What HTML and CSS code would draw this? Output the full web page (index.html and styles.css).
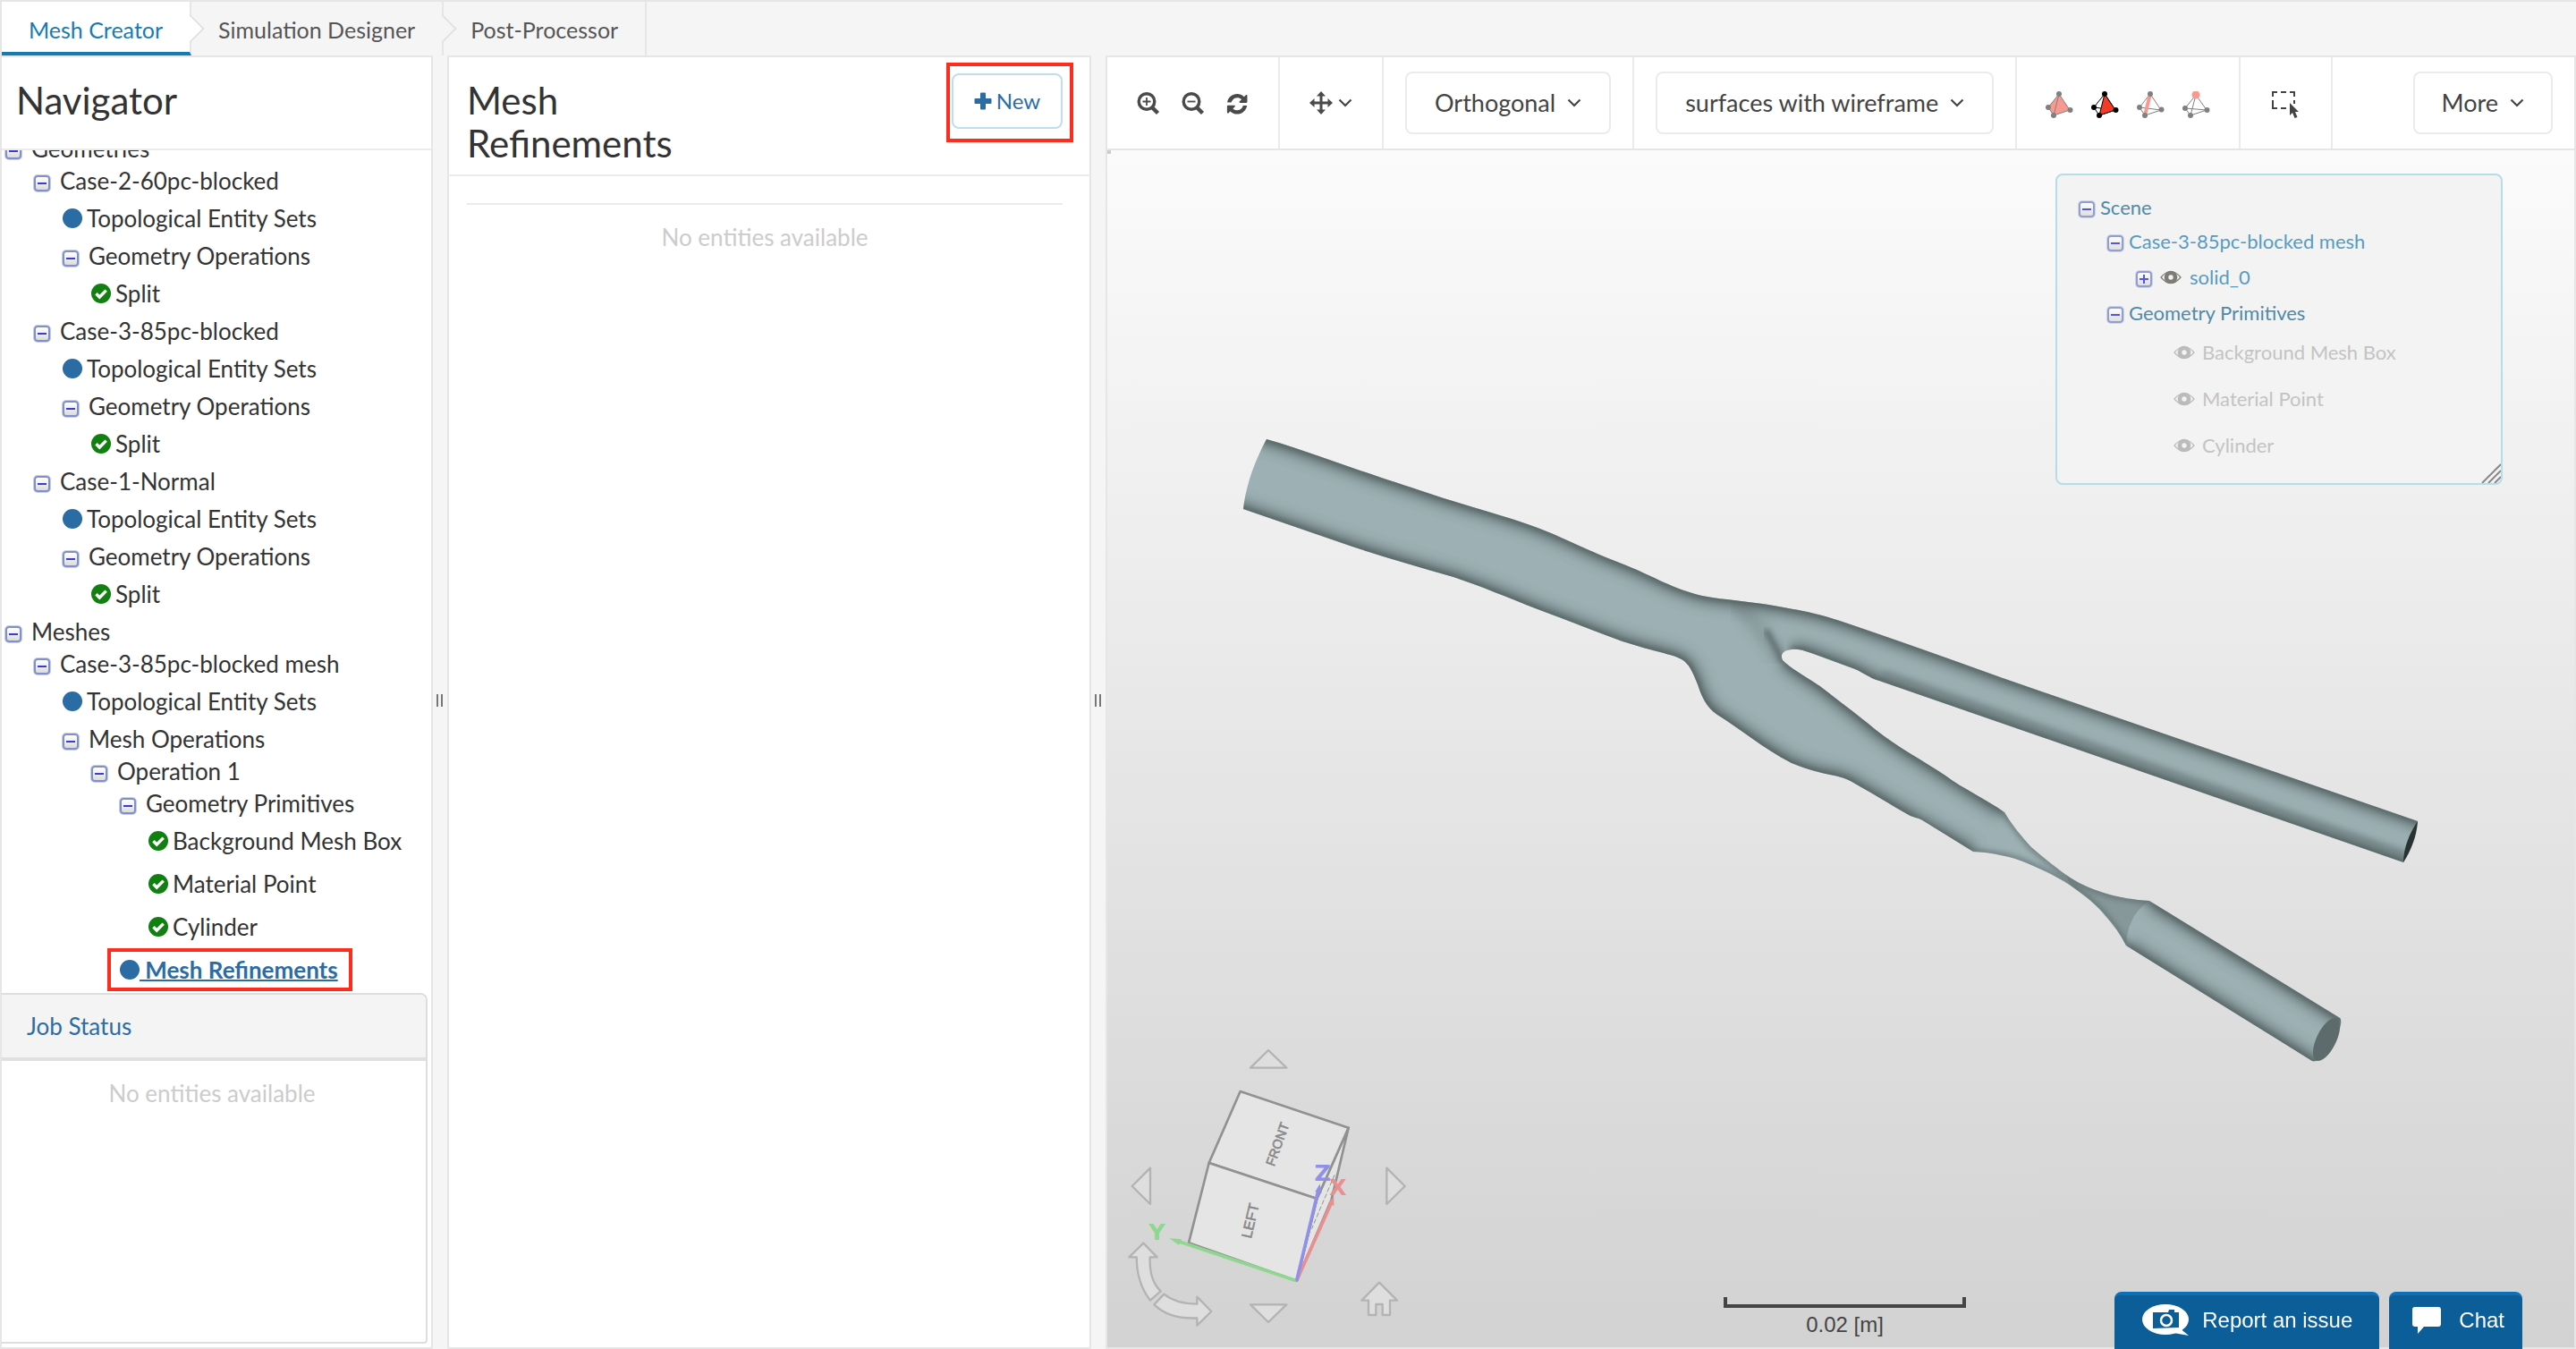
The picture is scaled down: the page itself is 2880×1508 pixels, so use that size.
FILE: index.html
```html
<!DOCTYPE html>
<html lang="en">
<head>
<meta charset="utf-8">
<title>Mesh Creator</title>
<link rel="stylesheet" href="styles.css">
</head>
<body>
<svg class="defs" aria-hidden="true">
  <symbol id="check" viewBox="0 0 22 22"><circle cx="11" cy="11" r="11" fill="#118011"/><path d="M5.500 11.200l3.800 3.800 7.400-7.400" fill="none" stroke="#fff" stroke-width="3.400"/></symbol>
  <symbol id="dot" viewBox="0 0 22 22"><circle cx="11" cy="11" r="11" fill="#2c6ca5"/></symbol>
  <symbol id="eye" viewBox="0 0 24 16"><path d="M1 8Q12-5 23 8Q12 21 1 8z" fill="none" stroke="currentColor" stroke-width="1.200"/><circle cx="12" cy="8" r="5" fill="none" stroke="currentColor" stroke-width="4.600"/></symbol>
  <symbol id="chev" viewBox="0 0 16 10"><path d="M1.500 1.500L8 8l6.500-6.500" fill="none" stroke="#444" stroke-width="2.200"/></symbol>
</svg>
<div class="app">
  <nav class="tabs">
    <a class="tab active" href="#mesh">Mesh Creator</a>
    <a class="tab" href="#sim">Simulation Designer</a>
    <a class="tab" href="#post">Post-Processor</a>
  </nav>
  <main class="panes">
    <section class="pane navigator">
      <header class="pane-head"><h1>Navigator</h1></header>
      <div class="tree-scroll">
        <ul class="tree">
          <li><div class="node"><button class="toggle" aria-label="Collapse"></button>Geometries</div>
            <ul>
              <li><div class="node"><button class="toggle" aria-label="Collapse"></button>Case-2-60pc-blocked</div>
                <ul>
                  <li class="leaf"><svg class="status"><use href="#dot"/></svg>Topological Entity Sets</li>
                  <li><div class="node"><button class="toggle" aria-label="Collapse"></button>Geometry Operations</div>
                    <ul><li class="leaf"><svg class="status"><use href="#check"/></svg>Split</li></ul></li>
                </ul></li>
              <li><div class="node"><button class="toggle" aria-label="Collapse"></button>Case-3-85pc-blocked</div>
                <ul>
                  <li class="leaf"><svg class="status"><use href="#dot"/></svg>Topological Entity Sets</li>
                  <li><div class="node"><button class="toggle" aria-label="Collapse"></button>Geometry Operations</div>
                    <ul><li class="leaf"><svg class="status"><use href="#check"/></svg>Split</li></ul></li>
                </ul></li>
              <li><div class="node"><button class="toggle" aria-label="Collapse"></button>Case-1-Normal</div>
                <ul>
                  <li class="leaf"><svg class="status"><use href="#dot"/></svg>Topological Entity Sets</li>
                  <li><div class="node"><button class="toggle" aria-label="Collapse"></button>Geometry Operations</div>
                    <ul><li class="leaf"><svg class="status"><use href="#check"/></svg>Split</li></ul></li>
                </ul></li>
            </ul></li>
          <li><div class="node"><button class="toggle" aria-label="Collapse"></button>Meshes</div>
            <ul>
              <li><div class="node"><button class="toggle" aria-label="Collapse"></button>Case-3-85pc-blocked mesh</div>
                <ul>
                  <li class="leaf"><svg class="status"><use href="#dot"/></svg>Topological Entity Sets</li>
                  <li><div class="node"><button class="toggle" aria-label="Collapse"></button>Mesh Operations</div>
                    <ul>
                      <li><div class="node"><button class="toggle" aria-label="Collapse"></button>Operation 1</div>
                        <ul>
                          <li><div class="node"><button class="toggle" aria-label="Collapse"></button>Geometry Primitives</div>
                            <ul>
                              <li class="leaf"><svg class="status"><use href="#check"/></svg>Background Mesh Box</li>
                              <li class="leaf"><svg class="status"><use href="#check"/></svg>Material Point</li>
                              <li class="leaf"><svg class="status"><use href="#check"/></svg>Cylinder</li>
                            </ul></li>
                          <li class="leaf current"><svg class="status"><use href="#dot"/></svg><a href="#refinements">&nbsp;Mesh Refinements</a></li>
                        </ul></li>
                    </ul></li>
                </ul></li>
            </ul></li>
        </ul>
      </div>
      <section class="jobs">
        <h2><a href="#jobs">Job Status</a></h2>
        <p class="empty">No entities available</p>
      </section>
    </section>
    <div class="splitter"><i></i></div>
    <section class="pane detail">
      <header class="pane-head detail-head">
        <h1>Mesh Refinements</h1>
        <div class="marked"><button class="new"><svg viewBox="0 0 20 20"><path d="M7 1.500a1 1 0 0 1 1-1h4a1 1 0 0 1 1 1V7h5.500a1 1 0 0 1 1 1v4a1 1 0 0 1-1 1H13v5.500a1 1 0 0 1-1 1H8a1 1 0 0 1-1-1V13H1.500a1 1 0 0 1-1-1V8a1 1 0 0 1 1-1H7z" fill="currentColor"/></svg>New</button></div>
      </header>
      <div class="detail-body"><hr><p class="empty">No entities available</p></div>
    </section>
    <div class="splitter"><i></i></div>
    <section class="pane viewer">
      <div class="toolbar">
        <div class="group icons">
          <button aria-label="Zoom in"><svg width="26" height="26" viewBox="0 0 26 26" fill="none" stroke="#4a4a4a"><circle cx="11" cy="10.500" r="8.800" stroke-width="3.400"/><path d="M11 6v9M6.500 10.500h9" stroke-width="1.800"/><path d="M17 17l6.500 6.500" stroke-width="4.400"/></svg></button>
          <button aria-label="Zoom out"><svg width="26" height="26" viewBox="0 0 26 26" fill="none" stroke="#4a4a4a"><circle cx="11" cy="10.500" r="8.800" stroke-width="3.400"/><path d="M6.500 10.500h9" stroke-width="1.800"/><path d="M17 17l6.500 6.500" stroke-width="4.400"/></svg></button>
          <button aria-label="Reset"><svg width="24" height="24" viewBox="0 0 512 512"><path fill="#4a4a4a" d="M494 310c0 1 0 2-1 3-27 111-119 188-235 188-61 0-121-24-165-66l-43 43c-3 3-8 5-13 5-10 0-18-8-18-18V310c0-10 8-18 18-18h156c10 0 18 8 18 18 0 5-2 10-5 13l-49 49c27 25 63 39 100 39 51 0 98-26 125-70 7-11 11-22 16-33 1-4 4-7 9-7h78c5 0 9 4 9 9zM500 60v155c0 10-8 18-18 18H326c-10 0-18-8-18-18 0-5 2-10 5-13l50-50c-27-25-63-38-100-38-51 0-98 26-125 70-7 11-11 22-16 33-1 4-4 7-9 7H32c-5 0-9-4-9-9v-3C50 100 142 23 258 23c62 0 122 24 166 67l44-44c3-3 8-5 13-5 10 0 19 9 19 19z"/></svg></button>
        </div>
        <div class="group move"><button aria-label="Move"><svg width="26" height="26" viewBox="0 0 26 26" fill="#4a4a4a"><path d="M13 0l5 5.500h-3.500v6h6V8L26 13l-5.500 5v-3.500h-6v6H18L13 26l-5-5.500h3.500v-6h-6V18L0 13l5.500-5v3.500h6v-6H8z"/></svg><svg class="chev"><use href="#chev"/></svg></button></div>
        <div class="group"><button class="drop">Orthogonal<svg class="chev"><use href="#chev"/></svg></button></div>
        <div class="group"><button class="drop">surfaces with wireframe<svg class="chev"><use href="#chev"/></svg></button></div>
        <div class="group tets">
          <button aria-label="Pick volumes"><svg viewBox="0 0 31 30"><path d="M15 3L3 18l6 9 18-6z" fill="#f9988f" stroke="#808080"/><path d="M15 3L9 27" stroke="#808080"/><g fill="#808080"><circle cx="15" cy="3" r="3"/><circle cx="3" cy="18" r="3"/><circle cx="9" cy="27" r="3"/><circle cx="27.500" cy="21" r="3"/></g></svg></button>
          <button aria-label="Pick faces"><svg viewBox="0 0 31 30"><path d="M15 3L3 18l6 9 18-6zM3 18l24 3" fill="none" stroke="#000"/><path d="M15 3L9 27l18-6z" fill="#f43b26" stroke="#000"/><g><circle cx="15" cy="3" r="3"/><circle cx="3" cy="18" r="3"/><circle cx="9" cy="27" r="3"/><circle cx="27.500" cy="21" r="3"/></g></svg></button>
          <button aria-label="Pick edges"><svg viewBox="0 0 31 30"><path d="M15 3L3 18l6 9 18-6zM3 18l24 3" fill="none" stroke="#808080"/><path d="M15 3L9 27" stroke="#f9988f" stroke-width="4"/><g fill="#808080"><circle cx="15" cy="3" r="3"/><circle cx="3" cy="18" r="3"/><circle cx="9" cy="27" r="3"/><circle cx="27.500" cy="20.500" r="3"/></g></svg></button>
          <button aria-label="Pick vertices"><svg viewBox="0 0 31 30"><path d="M15 4L3 19l6 8 18-6zM3 19l24 2M15 4L9 27" fill="none" stroke="#808080"/><g fill="#808080"><circle cx="3" cy="19" r="3"/><circle cx="9" cy="27" r="3"/><circle cx="27.500" cy="21" r="3"/></g><circle cx="15" cy="4" r="4.500" fill="#f9988f"/></svg></button>
        </div>
        <div class="group select"><button aria-label="Box select"><svg width="31" height="30" viewBox="0 0 31 30"><path d="M1 6V1h5M10 1h6M20 1h5v5M1 10v5M1 15v4h5M10 19h6M25 10v4" fill="none" stroke="#444" stroke-width="2"/><path d="M20 13v14l3-3 2.500 6 3-1-2.500-6h4z" fill="#444"/></svg></button></div>
        <button class="drop more">More<svg class="chev"><use href="#chev"/></svg></button>
      </div>
      <div class="scene">
        <svg class="vessel" viewBox="1238 168 1640 1338" role="img" aria-label="Blocked artery mesh">
          <defs>
            <path id="body" d="M1416 491C1448 500 1480 512 1512 523S1568 542 1596 551C1640 566 1685 577 1719 590S1780 618 1818 632C1850 645 1870 658 1903 666C1930 671 1955 672 1983 677S2030 685 2057 694C2120 715 2180 737 2239 758L2703 918C2699 935 2693 950 2687 964L2101 761C2090 758 2082 751 2074 748L2025 730C2015 726 2008 725 2003 726C1993 727 1990 732 1993 738C2003 748 2020 757 2036 768C2058 785 2078 800 2096 815C2122 836 2150 850 2175 867C2195 882 2220 893 2241 908C2250 923 2260 935 2271 947C2284 958 2297 969 2310 978C2335 996 2370 1005 2403 1007L2616 1138C2621 1144 2610 1168 2598 1181C2593 1186 2589 1187 2585 1186L2377 1057C2371 1045 2363 1034 2354 1024C2343 1010 2329 1000 2315 990C2300 980 2285 973 2271 967C2250 957 2225 953 2206 952L2151 918C2146 914 2139 914 2134 911C2113 899 2092 886 2074 876C2065 870 2056 868 2046 866C2030 863 2015 858 2003 853C1970 836 1945 814 1920 799C1908 791 1902 778 1898 765C1893 753 1889 742 1880 737C1873 733 1866 732 1860 730C1844 726 1830 722 1814 717C1782 705 1751 693 1719 681C1686 668 1655 655 1625 645C1587 634 1548 623 1512 611L1390 569C1393 542 1403 515 1416 491z"/>
            <clipPath id="bodyclip"><use href="#body"/></clipPath>
            <filter id="soft" x="-10%" y="-10%" width="120%" height="120%"><feGaussianBlur stdDeviation="8"/></filter>
            <filter id="softer" x="-10%" y="-10%" width="120%" height="120%"><feGaussianBlur stdDeviation="3"/></filter>
            <g id="sides">
              <path d="M1370 476L1416 491C1448 500 1480 512 1512 523S1568 542 1596 551C1640 566 1685 577 1719 590S1780 618 1818 632C1850 645 1870 658 1903 666C1930 671 1955 672 1983 677S2030 685 2057 694C2120 715 2180 737 2239 758L2750 934"/>
              <path d="M1360 559L1390 569L1512 611C1548 623 1587 634 1625 645C1655 655 1686 668 1719 681C1751 693 1782 705 1814 717C1830 722 1844 726 1860 730C1866 732 1873 733 1880 737C1889 742 1893 753 1898 765C1902 778 1908 791 1920 799C1945 814 1970 836 2003 853C2015 858 2030 863 2046 866C2056 868 2065 870 2074 876L2134 911L2206 952"/>
              <path d="M1993 738C2003 748 2020 757 2036 768C2058 785 2078 800 2096 815C2122 836 2150 850 2175 867L2241 908"/>
              <path d="M2730 979L2101 761C2090 758 2082 751 2074 748L2025 730C2015 726 2008 725 2003 726"/>
              <path d="M2403 1007L2650 1159M2377 1057L2620 1208"/>
            </g>
            <g id="neck">
              <path d="M2241 908C2250 923 2260 935 2271 947C2284 958 2297 969 2310 978C2335 996 2370 1005 2403 1007M2206 952C2225 953 2250 957 2271 967C2285 973 2300 980 2315 990C2329 1000 2343 1010 2354 1024C2363 1034 2371 1045 2377 1057"/>
            </g>
          </defs>
          <use href="#body" fill="#9db1b4"/>
          <g clip-path="url(#bodyclip)" fill="none" stroke="#3d4a49">
            <use href="#sides" filter="url(#soft)" stroke-width="13" opacity=".7"/>
            <use href="#sides" filter="url(#softer)" stroke-width="5" opacity=".7"/>
            <use href="#neck" filter="url(#softer)" stroke-width="5" opacity=".6"/>
            <path d="M1940 676C1960 690 1972 710 1990 736" filter="url(#soft)" stroke-width="10" opacity=".35"/>
            <path d="M1974 704C1982 716 1986 726 1992 738" filter="url(#softer)" stroke-width="5" opacity=".7"/>
            <path d="M2106 752L2690 955" filter="url(#softer)" stroke-width="4" opacity=".3"/>
            <path d="M2377 1057C2378 1035 2386 1018 2403 1007C2370 1005 2335 996 2310 978L2315 990C2345 1010 2365 1030 2377 1057z" fill="#5c6b6b" stroke="none" opacity=".35"/>
          </g>
          <path d="M2703 918C2694 931 2687 948 2687 964C2696 950 2702 934 2703 918z" fill="#273232"/>
          <ellipse cx="2601" cy="1162" rx="11" ry="26" transform="rotate(26 2601 1162)" fill="#5d6b6c"/>
        </svg>
        <aside class="scene-tree">
          <div class="row"><button class="toggle" aria-label="Collapse"></button><a class="dark" href="#scene">Scene</a></div>
          <div class="row l1 tight"><button class="toggle" aria-label="Collapse"></button><a href="#case3">Case-3-85pc-blocked mesh</a></div>
          <div class="row l2 solid"><button class="toggle plus" aria-label="Expand"></button><svg class="eye on"><use href="#eye"/></svg><a href="#solid">solid_0</a></div>
          <div class="row l1"><button class="toggle" aria-label="Collapse"></button><a class="dark" href="#prims">Geometry Primitives</a></div>
          <div class="row l3"><svg class="eye"><use href="#eye"/></svg>Background Mesh Box</div>
          <div class="row l3"><svg class="eye"><use href="#eye"/></svg>Material Point</div>
          <div class="row l3"><svg class="eye"><use href="#eye"/></svg>Cylinder</div>
          <svg class="grip" viewBox="0 0 22 22"><path d="M1 22L22 1M8 22L22 8M15 22l7-7" stroke="#888" stroke-width="2"/></svg>
        </aside>
        <svg class="gizmo" viewBox="0 0 1080 1068" role="img" aria-label="View cube">
          <g fill="#dedede" stroke="#b3b3b3" stroke-width="7" stroke-linejoin="round">
            <path d="M534 72l61 59H474zM534 984l61-59H474zM77 528l61-61v121zM992 528l-61-61v121z"/>
            <path d="M115 719l46 47h-24c-2 50 10 90 36 114l-35 31c-30-38-46-84-46-145H67z"/>
            <path d="M184 890c32 26 68 33 111 33v-24l48 49-48 47v-25c-56 3-108-10-144-45z"/>
            <path d="M906 851l60 60h-24v49h-25v-36h-22v36h-25v-49h-23z"/>
          </g>
          <g fill="#e5e5e5" stroke="#919191" stroke-width="8" stroke-linejoin="round">
            <path d="M803 332l-57 240-117 273 68-275z"/>
            <path d="M440 210l363 122-106 238-362-120z"/>
            <path d="M335 450l362 120-68 275-362-127z"/>
            <path d="M756 490l-76 180" fill="none" stroke-width="3" stroke-dasharray="16 7"/>
          </g>
          <g class="face"><text x="565" y="402" transform="rotate(-70 565 387)" font-size="44">FRONT</text><text x="474" y="660" transform="rotate(-77 474 644)" font-size="48">LEFT</text></g>
          <g stroke-width="11" fill="none"><path d="M629 845L745 585" stroke="#e89090"/><path d="M629 845L236 714" stroke="#8fd68f"/><path d="M629 845L702 540" stroke="#9090e8"/></g>
          <path d="M754 564l0 30-20-9z" fill="#e89090"/><path d="M201 703l42 3-9 19z" fill="#8fd68f"/><path d="M707 520l6 32-22-5z" fill="#9090e8"/>
          <g class="axis"><text x="716" y="510" fill="#9090e8">Z</text><text x="767" y="557" fill="#e89090">X</text><text x="160" y="707" fill="#8fd68f">Y</text></g>
        </svg>
        <div class="scale"><i></i>0.02 [m]</div>
      </div>
    </section>
  </main>
  <div class="support">
    <button><svg width="54" height="36" viewBox="0 0 54 36"><ellipse cx="27" cy="17" rx="26" ry="17" fill="#fff"/><path d="M42 26l11 9-17-3z" fill="#fff"/><path d="M13 9h17l1-3h6v3h5v17l-29 1z" fill="#0c5e99"/><circle cx="28" cy="18" r="6" fill="none" stroke="#fff" stroke-width="2.500"/></svg>Report an issue</button>
    <button class="chat"><svg width="32" height="30" viewBox="0 0 32 30"><path d="M3 0h26a3 3 0 0 1 3 3v16a3 3 0 0 1-3 3H13l-7 8v-8H3a3 3 0 0 1-3-3V3a3 3 0 0 1 3-3z" fill="#fff"/></svg>Chat</button>
  </div>
</div>
</body>
</html>
```
FILE: styles.css
```css
*, *::before, *::after { box-sizing: border-box; }
body { margin: 0; font: 26px/36px Lato, "Open Sans", sans-serif; color: #333; background: #f5f5f5; }
button { font: inherit; color: inherit; background: none; border: 0; padding: 0; cursor: pointer; }
a { color: #2c6ca5; text-decoration: none; }
h1, h2, p, ul { margin: 0; padding: 0; font-weight: 400; }
ul { list-style: none; }
.defs { position: absolute; width: 0; height: 0; }
.app { display: flex; flex-direction: column; height: 100vh; border-top: 2px solid #e6e6e6; }

.tabs { display: flex; height: 60px; border-left: 2px solid #e6e6e6; }
.tab { position: relative; padding: 0 30px; font-size: 25px; line-height: 62px; color: #555; border-right: 2px solid #e6e6e6; }
.tab.active { color: #167bb0; background: #fff; border-bottom: 4px solid #167bb0; }
.tab:not(:last-child)::after { content: ""; position: absolute; right: -12px; top: 18px; width: 24px; height: 24px; background: inherit; border: solid #e0e0e0; border-width: 2px 2px 0 0; transform: rotate(45deg); clip-path: polygon(0 0, 100% 0, 100% 100%); z-index: 1; }
.tab:not(.active)::after { background: #f5f5f5; }

.panes { flex: 1; min-height: 0; display: grid; grid-template-columns: minmax(0, 121fr) 16px minmax(0, 180fr) 16px minmax(0, 411fr); }
.pane { display: flex; flex-direction: column; min-height: 0; background: #fff; border: 2px solid #e6e6e6; }
.pane-head { padding: 24px 18px; border-bottom: 2px solid #ebebeb; }
.pane-head h1 { font-size: 42px; line-height: 48px; }
.navigator .pane-head { padding: 24px 16px 30px; }
.splitter { display: grid; place-items: center; padding: 0 2px 4px 0; }
.splitter i { width: 7px; height: 14px; border: solid #777; border-width: 0 2px; }

.tree-scroll { flex: 1; min-height: 0; overflow: hidden; }
.tree { margin-top: -20px; }
.tree ul { padding-left: 32px; }
.node { display: flex; gap: 11px; height: 36px; padding-left: 4px; white-space: nowrap; }
.toggle { position: relative; flex: none; align-self: center; width: 18px; height: 18px; margin-top: 6px; border: 2px solid #8390c6; border-radius: 4px; background: linear-gradient(#fff, #dcdcdc); box-shadow: 0 0 0 1px #c9cfe8; }
.toggle::before, .plus::after { content: ""; position: absolute; left: 2px; top: 6px; width: 10px; height: 2px; background: #3b3bd6; }
.plus::after { transform: rotate(90deg); }
.leaf { display: flex; align-items: center; gap: 5px; height: 48px; padding-left: 4px; white-space: nowrap; }
.status { width: 22px; height: 22px; }
.current { position: relative; gap: 0; font-weight: 700; }
.current a { text-decoration: underline; text-decoration-thickness: 2px; }
.current::after { content: ""; position: absolute; left: -10px; top: 0; width: 274px; height: 48px; border: 4px solid #ff2b1c; }

.jobs { flex: none; height: 392px; margin: 0 4px 4px 0; border: 2px solid #ddd; border-left: 0; border-radius: 0 8px 4px 0; }
.jobs h2 { padding: 18px 28px; font-size: 26px; line-height: 34px; background: #f4f4f4; border-bottom: 4px solid #e0e0e0; border-radius: 0 6px 0 0; }
.empty { text-align: center; color: #ccc; }
.jobs .empty { padding: 18px 4px 0 0; }

.detail-head { display: flex; justify-content: space-between; align-items: flex-start; padding: 24px 20px 11px; }
.detail-head h1 { width: 280px; }
.marked { margin: -18px -2px 0 0; padding: 8px 8px 11px 2px; border: 4px solid #ff2b1c; }
.new { display: flex; align-items: center; justify-content: center; gap: 5px; width: 124px; height: 62px; color: #2c6ca5; font-size: 24px; border: 2px solid #bfdeec; border-radius: 8px; }
.new svg { width: 20px; height: 20px; }
.detail-body { padding: 30px 30px 0 20px; }
hr { margin: 0; border: 0; border-top: 2px solid #ebebeb; }
.detail-body .empty { padding-top: 18px; }

.toolbar { display: flex; height: 104px; flex: none; border-bottom: 2px solid #e6e6e6; }
.group { display: flex; align-items: center; padding: 0 24px; border-right: 2px solid #ebebeb; }
.toolbar button { display: flex; align-items: center; }
.chev { width: 16px; height: 10px; }
.icons { padding: 2px 34px 0 33px; gap: 24px; }
.move { padding: 0 33px; }
.move button { gap: 6px; }
.toolbar .drop { height: 70px; padding: 0 31px; gap: 13px; color: #444; font-size: 27px; border: 2px solid #ebebeb; border-radius: 8px; white-space: nowrap; }
.tets { padding: 4px 32px 0; gap: 20px; }
.tets svg { width: 31px; height: 30px; }
.select { padding: 4px 35px 0; }
.toolbar .more { margin: 16px 24px 0 auto; padding: 0 30px; }

.scene { position: relative; flex: 1; min-height: 0; background: linear-gradient(#fbfbfb, #d2d2d2); }
.scene::before { content: ""; position: absolute; width: 4px; height: 4px; background: #ccc; }
.vessel { position: absolute; inset: 0; width: 100%; height: 100%; }
.scene-tree { position: absolute; right: 80px; top: 26px; width: 500px; height: 348px; padding: 18px 24px; background: #f3f3f3; border: 2px solid #b5dce9; border-radius: 8px; font-size: 22px; color: #c3c3c3; }
.scene-tree a { color: #569cc0; }
.scene-tree a.dark { color: #4f8aa8; }
.row { display: flex; align-items: center; gap: 6px; height: 36px; }
.tight { margin-top: 2px; }
.l1 { padding-left: 32px; }
.l2 { padding-left: 64px; }
.l3 { height: 52px; padding-left: 106px; gap: 8px; }
.solid { height: 44px; gap: 9px; }
.row .toggle { margin-top: 4px; opacity: .85; }
.eye { width: 24px; height: 16px; color: #bbb; }
.eye.on { color: #7d7d76; }
.grip { position: absolute; right: 0; bottom: 0; width: 22px; height: 22px; }
.gizmo { position: absolute; left: 2px; bottom: 0; width: 360px; height: 356px; }
.gizmo text { text-anchor: middle; }
.face { font-family: "Liberation Sans", Arial, sans-serif; fill: #8a8a8a; stroke: #8a8a8a; stroke-width: 2; }
.axis { font: 700 76px "DejaVu Sans", sans-serif; }
.scale { position: absolute; left: 50%; bottom: 6px; width: 271px; margin-left: -131px; text-align: center; font: 24px/38px "Liberation Sans", Arial, sans-serif; color: #444; }
.scale i { display: block; height: 12px; border: solid #444; border-width: 0 4px 4px; }

.support { position: fixed; right: 60px; bottom: 0; display: flex; gap: 11px; }
.support button { display: flex; align-items: center; gap: 14px; height: 64px; padding: 0 30px 4px; color: #fff; font: 24px/36px "Liberation Sans", Arial, sans-serif; background: #0c5e99; border-top: 4px solid #0d6fb8; border-radius: 8px 8px 0 0; }
.support .chat { padding: 0 20px 4px 26px; gap: 20px; }
```
